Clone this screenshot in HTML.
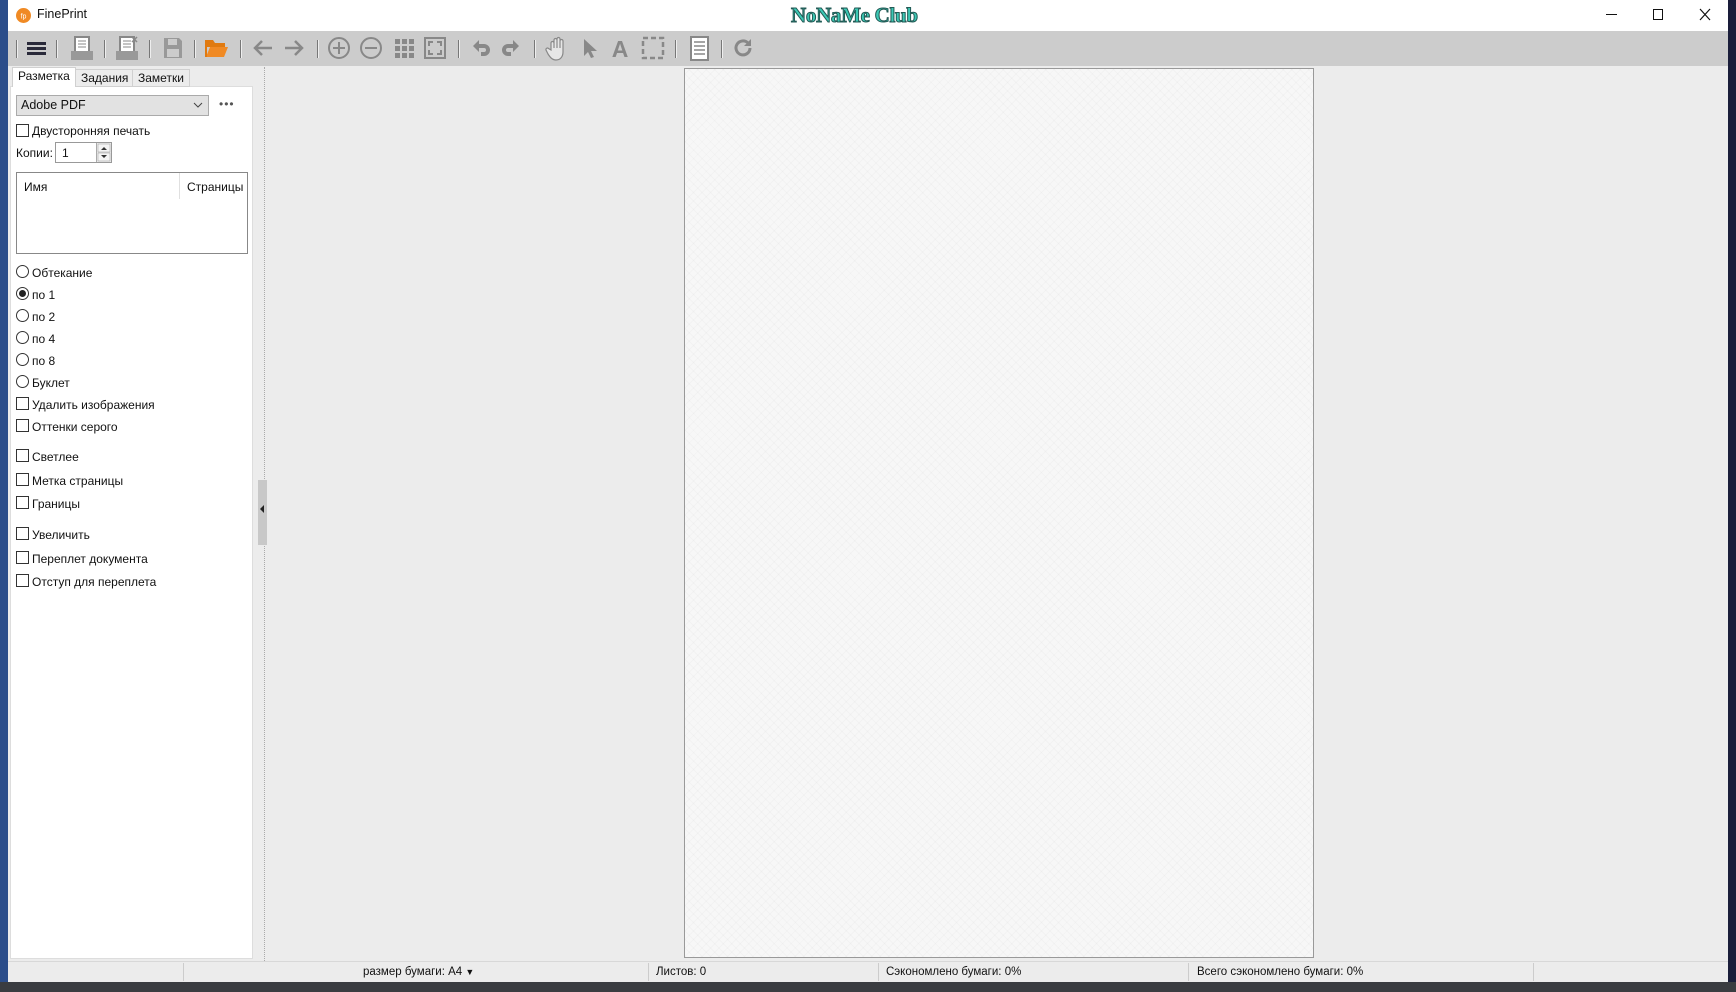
<!DOCTYPE html>
<html><head><meta charset="utf-8"><style>
*{margin:0;padding:0;box-sizing:border-box}
body{width:1736px;height:992px;position:relative;overflow:hidden;background:#1a1d3a;font-family:"Liberation Sans","Noto Sans CJK SC",sans-serif;font-size:12px;color:#111}
.a{position:absolute}
.win{left:8px;top:0;width:1720px;height:982px;background:#ececec}
.title{left:8px;top:0;width:1720px;height:31px;background:#fff}
.tb{left:8px;top:31px;width:1720px;height:35px;background:#cccccc}
.sep{position:absolute;top:40px;width:2px;height:18px;border-left:1px solid #777;border-right:1px solid #eee}
.ic{position:absolute;top:36px}
.panel{left:10px;top:86px;width:243px;height:873px;background:#fff;border:1px solid #ddd}
.tab{position:absolute;top:69px;height:18px;border:1px solid #d0d0d0;background:#ececec;font-size:12px;padding:0 5px;line-height:16px}
.cb{position:absolute;width:13px;height:13px;border:1px solid #333;background:#fff}
.rb{position:absolute;width:13px;height:13px;border:1px solid #333;border-radius:50%;background:#fff}
.lbl{position:absolute;left:32px;white-space:nowrap}
.status{left:8px;top:961px;width:1720px;height:21px;background:#ececec;border-top:1px solid #d8d8d8}
.sd{position:absolute;top:963px;width:1px;height:18px;background:#ccc}
.st{position:absolute;top:966px;font-size:11.5px;color:#111;white-space:nowrap}
</style></head><body>
<div class="a" style="left:0;top:982px;width:1736px;height:10px;background:#3a3c40"></div>
<div class="a" style="left:0;top:0;width:8px;height:982px;background:#2b4d8a"></div>
<div class="a win"></div>
<div class="a title"></div>
<svg class="a" style="left:16px;top:8px" width="15" height="15"><circle cx="7.5" cy="7.5" r="7.5" fill="#f08a24"/><text x="7.5" y="10.5" font-size="7" fill="#fff" text-anchor="middle" font-family="Liberation Sans">fp</text></svg>
<div class="a" style="left:37px;top:7px;font-size:12.5px">FinePrint</div>
<div class="a" style="left:791px;top:3px;font-family:'Liberation Serif',serif;font-weight:bold;font-size:21px;color:#3cc8b4;-webkit-text-stroke:1px #225a55;letter-spacing:-0.3px">NoNaMe Club</div>
<div class="a" style="left:1606px;top:14px;width:11px;height:1px;background:#111"></div>
<div class="a" style="left:1653px;top:9px;width:10px;height:11px;border:1px solid #111"></div>
<svg class="a" style="left:1699px;top:8px" width="12" height="13"><path d="M1 1L11 12M11 1L1 12" stroke="#111" stroke-width="1.2"/></svg>
<div class="a tb"></div>
<div class="sep" style="left:16px"></div><div class="sep" style="left:56px"></div><div class="sep" style="left:104px"></div><div class="sep" style="left:149px"></div><div class="sep" style="left:194px"></div><div class="sep" style="left:240px"></div><div class="sep" style="left:317px"></div><div class="sep" style="left:458px"></div><div class="sep" style="left:534px"></div><div class="sep" style="left:675px"></div><div class="sep" style="left:721px"></div>
<svg class="ic" style="left:26px" width="22" height="24"><rect x="1" y="6" width="19" height="3" fill="#2a2a3a"/><rect x="1" y="11" width="19" height="3" fill="#2a2a3a"/><rect x="1" y="16" width="19" height="3" fill="#2a2a3a"/></svg>
<svg class="ic" style="left:70px" width="24" height="26"><rect x="5" y="1" width="14" height="15" fill="#fff" stroke="#888" stroke-width="2"/><path d="M8 5h8M8 8h8M8 11h8" stroke="#888"/><rect x="1" y="15" width="22" height="9" fill="#999"/></svg>
<svg class="ic" style="left:115px" width="24" height="26"><rect x="5" y="1" width="14" height="15" fill="#fff" stroke="#888" stroke-width="2"/><path d="M8 5h8M8 8h8M8 11h8" stroke="#888"/><path d="M17 1l5 5M22 1l-5 5" stroke="#888" stroke-width="1.5"/><rect x="1" y="15" width="22" height="9" fill="#999"/></svg>
<svg class="ic" style="left:162px" width="22" height="24"><path d="M2 2h15l3 3v17H2z" fill="#999"/><rect x="6" y="3" width="9" height="6" fill="#ccc"/><rect x="5" y="13" width="12" height="8" fill="#ccc"/></svg>
<svg class="ic" style="left:205px" width="24" height="24"><path d="M1 4h7l2 3h10v4H1z" fill="#e07a10"/><path d="M1 21l4-10h18l-4 10z" fill="#f08a24"/><path d="M1 4v17" stroke="#e07a10" stroke-width="2"/></svg>
<svg class="ic" style="left:251px" width="24" height="24"><path d="M21 12H4M11 5l-7 7 7 7" fill="none" stroke="#888" stroke-width="2.5"/></svg>
<svg class="ic" style="left:282px" width="24" height="24"><path d="M3 12h17M13 5l7 7-7 7" fill="none" stroke="#888" stroke-width="2.5"/></svg>
<svg class="ic" style="left:327px" width="24" height="24"><circle cx="12" cy="12" r="10" fill="none" stroke="#888" stroke-width="2"/><path d="M12 6v12M6 12h12" stroke="#888" stroke-width="2"/></svg>
<svg class="ic" style="left:359px" width="24" height="24"><circle cx="12" cy="12" r="10" fill="none" stroke="#888" stroke-width="2"/><path d="M6 12h12" stroke="#888" stroke-width="2"/></svg>
<svg class="ic" style="left:392px" width="24" height="24" fill="#888"><rect x="3" y="3" width="5" height="5"/><rect x="10" y="3" width="5" height="5"/><rect x="17" y="3" width="5" height="5"/><rect x="3" y="10" width="5" height="5"/><rect x="10" y="10" width="5" height="5"/><rect x="17" y="10" width="5" height="5"/><rect x="3" y="17" width="5" height="5"/><rect x="10" y="17" width="5" height="5"/><rect x="17" y="17" width="5" height="5"/></svg>
<svg class="ic" style="left:423px" width="24" height="24"><rect x="2" y="2" width="20" height="20" fill="none" stroke="#888" stroke-width="2"/><path d="M6 10V6h4M14 6h4v4M18 14v4h-4M10 18H6v-4" fill="none" stroke="#888" stroke-width="2"/></svg>
<svg class="ic" style="left:469px" width="24" height="24"><path d="M4 10l6-6v4h5a6 6 0 010 12h-3v-4h3a2 2 0 000-4h-5v4z" fill="#888"/></svg>
<svg class="ic" style="left:499px" width="24" height="24"><path d="M20 10l-6-6v4H9a6 6 0 000 12h3v-4H9a2 2 0 010-4h5v4z" fill="#888"/></svg>
<svg class="ic" style="left:545px" width="24" height="26"><path d="M6 14V7a1.5 1.5 0 013 0v5V4a1.5 1.5 0 013 0v8V3a1.5 1.5 0 013 0v9V5a1.5 1.5 0 013 0v11c0 5-3 8-7 8s-6-3-8-6l-2-4a1.5 1.5 0 012.5-1.5z" fill="#e6e6e6" stroke="#888" stroke-width="1.2"/></svg>
<svg class="ic" style="left:580px" width="20" height="24"><path d="M4 3v17l4-4 3 6 3-1-3-6h6z" fill="#888"/></svg>
<svg class="ic" style="left:608px" width="24" height="24"><text x="12" y="21" text-anchor="middle" font-family="Liberation Sans" font-weight="bold" font-size="23" fill="#888">A</text></svg>
<svg class="ic" style="left:641px" width="24" height="24"><rect x="2" y="2" width="20" height="20" fill="none" stroke="#888" stroke-width="2.5" stroke-dasharray="5 3"/></svg>
<svg class="ic" style="left:688px" width="24" height="26"><rect x="3" y="1" width="17" height="23" fill="#fff" stroke="#888" stroke-width="2"/><path d="M6 6h11M6 10h11M6 14h11M6 18h11" stroke="#888" stroke-width="1.5"/></svg>
<svg class="ic" style="left:731px" width="24" height="24"><path d="M19 12a7 7 0 11-2-5" fill="none" stroke="#888" stroke-width="3"/><path d="M20 3v7h-7z" fill="#888"/></svg>

<div class="a panel"></div>
<div class="tab" style="left:12px;top:67px;height:20px;background:#fff;border-bottom:none;z-index:2">Разметка</div>
<div class="tab" style="left:75px">Задания</div>
<div class="tab" style="left:132px">Заметки</div>
<div class="a" style="left:16px;top:95px;width:193px;height:21px;background:#e2e2e2;border:1px solid #aaa;padding:2px 4px;font-size:12.5px">Adobe PDF<svg style="position:absolute;right:5px;top:6px" width="10" height="7"><path d="M1 1l4 4 4-4" fill="none" stroke="#444"/></svg></div>
<div class="a" style="left:219px;top:97px;font-size:12px;color:#555;letter-spacing:1px">•••</div>
<div class="cb" style="left:16px;top:124px"></div><div class="lbl" style="top:124px">Двусторонняя печать</div>
<div class="a" style="left:16px;top:146px">Копии:</div>
<div class="a" style="left:55px;top:142px;width:57px;height:21px;border:1px solid #999;background:#fff;padding:3px 6px">1</div>
<div class="a" style="left:96px;top:143px;width:15px;height:19px;border-left:1px solid #aaa;background:#eee"><svg width="15" height="19"><rect x="1" y="1" width="12" height="8" fill="#f4f4f4" stroke="#999" stroke-width=".5"/><rect x="1" y="10" width="12" height="8" fill="#f4f4f4" stroke="#999" stroke-width=".5"/><path d="M4 7l3-3 3 3zM4 12l3 3 3-3z" fill="#333"/></svg></div>
<div class="a" style="left:16px;top:172px;width:232px;height:82px;border:1px solid #888;background:#fff"></div>
<div class="a" style="left:24px;top:180px">Имя</div>
<div class="a" style="left:179px;top:173px;width:1px;height:26px;background:#e0e0e0"></div>
<div class="a" style="left:187px;top:180px">Страницы</div>
<div class="rb" style="left:16px;top:265px"></div><div class="lbl" style="top:266px">Обтекание</div>
<div class="rb" style="left:16px;top:287px"><div style="position:absolute;left:2px;top:2px;width:7px;height:7px;border-radius:50%;background:#222"></div></div><div class="lbl" style="top:288px">по 1</div>
<div class="rb" style="left:16px;top:309px"></div><div class="lbl" style="top:310px">по 2</div>
<div class="rb" style="left:16px;top:331px"></div><div class="lbl" style="top:332px">по 4</div>
<div class="rb" style="left:16px;top:353px"></div><div class="lbl" style="top:354px">по 8</div>
<div class="rb" style="left:16px;top:375px"></div><div class="lbl" style="top:376px">Буклет</div>
<div class="cb" style="left:16px;top:397px"></div><div class="lbl" style="top:398px">Удалить изображения</div>
<div class="cb" style="left:16px;top:419px"></div><div class="lbl" style="top:420px">Оттенки серого</div>
<div class="cb" style="left:16px;top:449px"></div><div class="lbl" style="top:450px">Светлее</div>
<div class="cb" style="left:16px;top:473px"></div><div class="lbl" style="top:474px">Метка страницы</div>
<div class="cb" style="left:16px;top:496px"></div><div class="lbl" style="top:497px">Границы</div>
<div class="cb" style="left:16px;top:527px"></div><div class="lbl" style="top:528px">Увеличить</div>
<div class="cb" style="left:16px;top:551px"></div><div class="lbl" style="top:552px">Переплет документа</div>
<div class="cb" style="left:16px;top:574px"></div><div class="lbl" style="top:575px">Отступ для переплета</div>

<div class="a" style="left:264px;top:67px;width:0;height:894px;border-left:1px dotted #aaa"></div>
<div class="a" style="left:258px;top:480px;width:9px;height:65px;background:#c8c8c8"><svg width="9" height="65"><path d="M6 9v8l-4-4z" fill="#222" transform="translate(0,16)"/></svg></div>

<div class="a" style="left:684px;top:68px;width:630px;height:890px;background:#f7f7f7;border:1px solid #999;background-image:repeating-linear-gradient(45deg,rgba(0,0,0,.02) 0 1px,transparent 1px 6px),repeating-linear-gradient(-45deg,rgba(0,0,0,.02) 0 1px,transparent 1px 6px)"></div>

<div class="a status"></div>
<div class="sd" style="left:183px"></div><div class="sd" style="left:648px"></div><div class="sd" style="left:878px"></div><div class="sd" style="left:1188px"></div><div class="sd" style="left:1533px"></div>
<div class="st" style="left:363px">размер бумаги: A4 <span style="font-size:9px">▼</span></div>
<div class="st" style="left:656px">Листов: 0</div>
<div class="st" style="left:886px">Сэкономлено бумаги: 0%</div>
<div class="st" style="left:1197px">Всего сэкономлено бумаги: 0%</div>
</body></html>
